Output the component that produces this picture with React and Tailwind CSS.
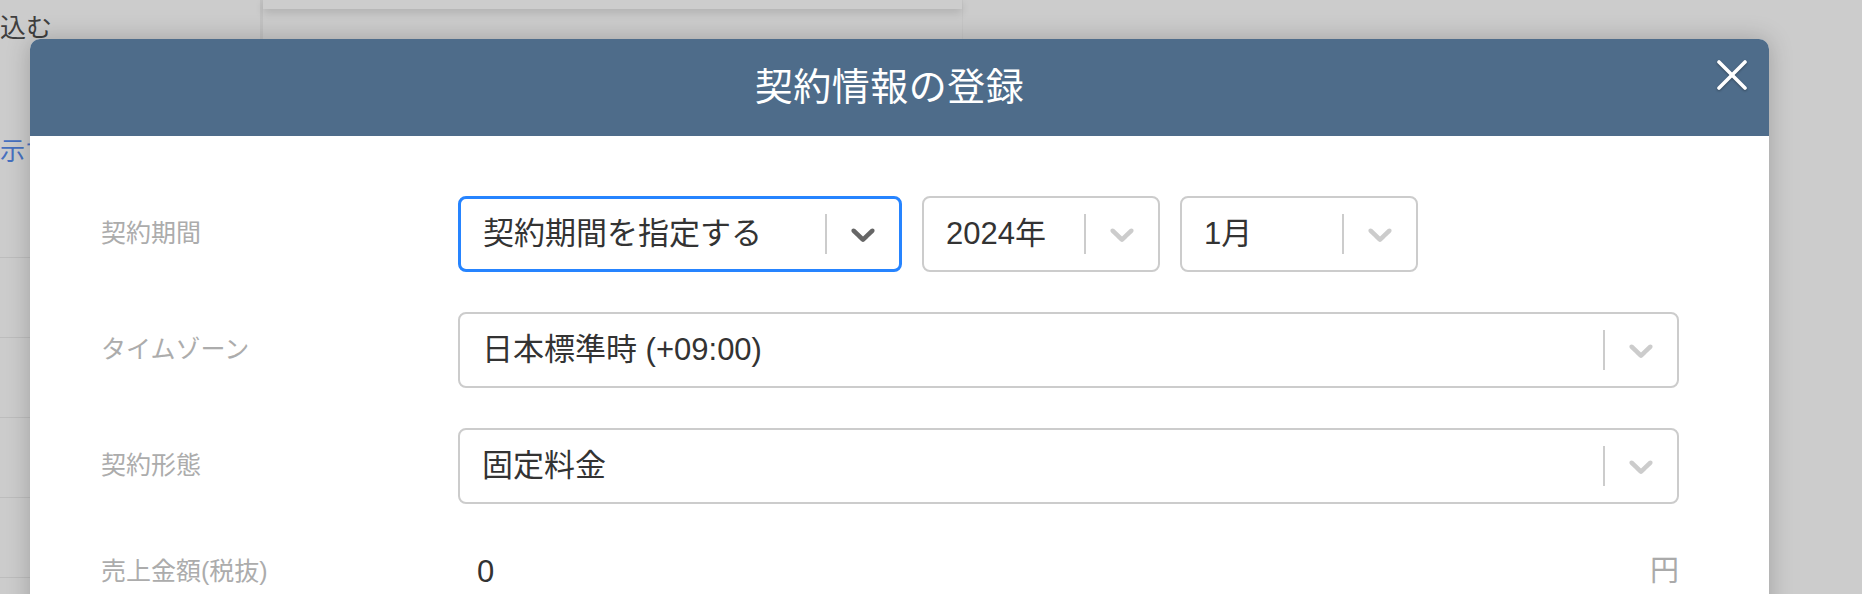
import React from 'react';
import clsx from 'clsx';

// react-select style chevron
function Chevron({ color }) {
    return (
        <svg width="40" height="40" viewBox="0 0 20 20" fill={color}>
            <path d="M4.516 7.548c0.436-0.446 1.043-0.481 1.576 0l3.908 3.747 3.908-3.747c0.533-0.481 1.141-0.446 1.574 0 0.436 0.445 0.408 1.197 0 1.615-0.406 0.418-4.695 4.502-4.695 4.502-0.217 0.223-0.502 0.335-0.787 0.335s-0.57-0.112-0.789-0.335c0 0-4.287-4.084-4.695-4.502s-0.436-1.17 0-1.615z" />
        </svg>
    );
}

function SelectBox({ value, focused, className }) {
    return (
        <div className={clsx(
            'flex items-center rounded-[8px] bg-white h-[76px] box-border',
            focused ? 'border-[3px] border-[#2684ff]' : 'border-2 border-[#cccccc]',
            className
        )}>
            <div className="flex-1 min-w-0 pl-[22px] text-[31px] leading-[40px] text-[#333333] whitespace-nowrap overflow-hidden">{value}</div>
            <span className="w-[2px] h-10 bg-[#cccccc] shrink-0" />
            <div className="px-4 flex items-center shrink-0">
                <Chevron color={focused ? '#666666' : '#cccccc'} />
            </div>
        </div>
    );
}

function Row({ label, children, className }) {
    return (
        <div className={clsx('flex items-center', className)}>
            <div className="w-[357px] shrink-0 text-[25px] text-[#acacac]">{label}</div>
            <div className="flex-1 flex items-center min-w-0">{children}</div>
        </div>
    );
}

export default function App() {
    return (
        <div className="relative w-[1862px] h-[594px] overflow-hidden bg-[#cccccc] font-['Liberation_Sans','Noto_Sans_CJK_JP',sans-serif]">
            {/* page underneath the overlay */}
            <div className="flex h-full">
                <div className="w-[263px] shrink-0 border-r-[3px] border-[#c2c2c2] flex flex-col">
                    <div className="pt-[12px] text-[26px] leading-[32px] text-[#3f3f3f]">込む</div>
                    <div className="mt-[91px] text-[25px] leading-[32px] text-[#4670bf]">示す</div>
                    <div className="mt-[90px] border-b border-[#bdbdbd]" />
                    <div className="h-[80px] border-b border-[#bdbdbd]" />
                    <div className="h-[80px] border-b border-[#bdbdbd]" />
                    <div className="h-[80px] border-b border-[#bdbdbd]" />
                    <div className="h-[80px] border-b border-[#bdbdbd]" />
                </div>
                <div className="w-[700px] shrink-0 border-r border-[#c6c6c6]">
                    <div className="h-[9px] bg-[#cdcdcd] shadow-[0_4px_8px_rgba(0,0,0,0.14)]" />
                </div>
                <div className="flex-1" />
            </div>

            {/* modal */}
            <div className="absolute top-[39px] left-[30px] w-[1739px] h-[600px] bg-white rounded-t-[10px] shadow-[0_0_24px_rgba(0,0,0,0.22)]">
                <div className="relative h-[97px] rounded-t-[10px] bg-[#4e6c8a] flex items-center justify-center pr-5">
                    <h1 className="text-[38px] font-normal text-white tracking-[0.5px]">契約情報の登録</h1>
                    <button className="absolute top-[21px] right-[22px] w-[30px] h-[30px] drop-shadow-[0_1px_1px_rgba(0,0,0,0.35)]">
                        <svg width="30" height="30" viewBox="0 0 30 30" stroke="white" strokeWidth="3.6" strokeLinecap="round">
                            <line x1="2" y1="2" x2="28" y2="28" />
                            <line x1="28" y1="2" x2="2" y2="28" />
                        </svg>
                    </button>
                </div>

                <div className="pl-[71px] pr-[90px] pt-[60px] flex flex-col gap-10">
                    <Row label="契約期間">
                        <div className="flex gap-5">
                            <SelectBox value="契約期間を指定する" focused className="w-[444px]" />
                            <SelectBox value="2024年" className="w-[238px]" />
                            <SelectBox value="1月" className="w-[238px]" />
                        </div>
                    </Row>
                    <Row label="タイムゾーン">
                        <SelectBox value="日本標準時 (+09:00)" className="flex-1" />
                    </Row>
                    <Row label="契約形態">
                        <SelectBox value="固定料金" className="flex-1" />
                    </Row>
                    <Row label="売上金額(税抜)" className="h-[56px]">
                        <div className="flex-1 flex items-center justify-between pl-[19px]">
                            <span className="text-[31px] text-[#333333]">0</span>
                            <span className="text-[29px] text-[#aaaaaa]">円</span>
                        </div>
                    </Row>
                </div>
            </div>
        </div>
    );
}
